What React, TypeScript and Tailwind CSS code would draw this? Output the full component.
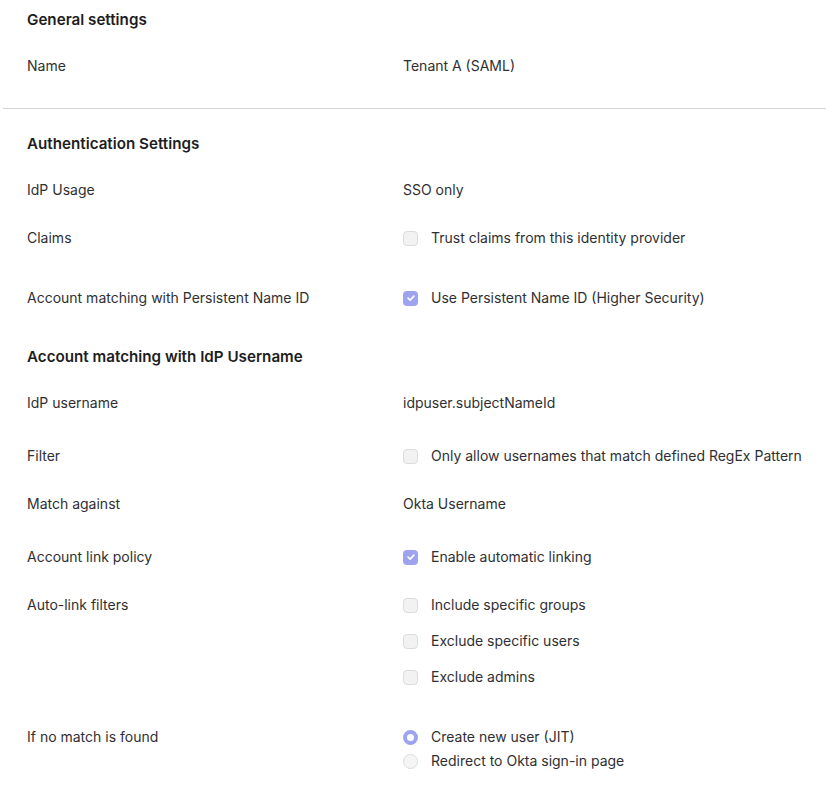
import React from 'react';

const Box = ({ checked }: { checked?: boolean }) =>
  checked ? (
    <span className="flex h-[15px] w-[15px] shrink-0 items-center justify-center rounded-[4px] bg-[#9ea3f0]">
      <svg viewBox="0 0 12 12" className="h-[10px] w-[10px]" fill="none" stroke="white" strokeWidth="2" strokeLinecap="round" strokeLinejoin="round">
        <path d="M2.5 6.2 5 8.5 9.5 3.8" />
      </svg>
    </span>
  ) : (
    <span className="h-[15px] w-[15px] shrink-0 rounded-[4px] border border-[#dcdcde] bg-[#f2f2f3]" />
  );

const Radio = ({ checked }: { checked?: boolean }) =>
  checked ? (
    <span className="h-[15px] w-[15px] shrink-0 rounded-full border-[4px] border-[#9ea3f0] bg-white" />
  ) : (
    <span className="h-[15px] w-[15px] shrink-0 rounded-full border border-[#dcdcde] bg-[#f5f5f6]" />
  );

const Option = ({ control, label }: { control: React.ReactNode; label: string }) => (
  <div className="flex h-5 items-center">
    <span className="flex w-[28px]">{control}</span>
    <span>{label}</span>
  </div>
);

const Row = ({ mt, label, children }: { mt: string; label: string; children: React.ReactNode }) => (
  <div className={`flex ${mt}`}>
    <div className="h-5 w-[376px] shrink-0 leading-5">{label}</div>
    <div className="flex-1 leading-5">{children}</div>
  </div>
);

const Heading = ({ mt, children }: { mt: string; children: React.ReactNode }) => (
  <h2 className={`${mt} h-5 text-[15.2px] font-semibold leading-5 text-[#1d1d21]`}>{children}</h2>
);

export default function App() {
  return (
    <div
      className="min-h-[788px] w-[826px] bg-white text-[14px] text-[#2f2f33]"
      style={{ fontFamily: 'Inter, "Noto Sans", sans-serif' }}
    >
      <div className="pl-[27px] pt-[10px]">
        <Heading mt="mt-0">General settings</Heading>
        <Row mt="mt-[26px]" label="Name">Tenant A (SAML)</Row>
      </div>

      <div className="ml-[3px] mt-[32px] border-t border-[#d4d4d6]" />

      <div className="pl-[27px]">
        <Heading mt="mt-[25px]">Authentication Settings</Heading>
        <Row mt="mt-[26px]" label="IdP Usage">SSO only</Row>
        <Row mt="mt-[28px]" label="Claims">
          <Option control={<Box />} label="Trust claims from this identity provider" />
        </Row>
        <Row mt="mt-[40px]" label="Account matching with Persistent Name ID">
          <Option control={<Box checked />} label="Use Persistent Name ID (Higher Security)" />
        </Row>

        <Heading mt="mt-[39px]">Account matching with IdP Username</Heading>
        <Row mt="mt-[26px]" label="IdP username">idpuser.subjectNameId</Row>
        <Row mt="mt-[33px]" label="Filter">
          <Option control={<Box />} label="Only allow usernames that match defined RegEx Pattern" />
        </Row>
        <Row mt="mt-[28px]" label="Match against">Okta Username</Row>
        <Row mt="mt-[33px]" label="Account link policy">
          <Option control={<Box checked />} label="Enable automatic linking" />
        </Row>
        <Row mt="mt-[28px]" label="Auto-link filters">
          <div className="flex flex-col gap-4">
            <Option control={<Box />} label="Include specific groups" />
            <Option control={<Box />} label="Exclude specific users" />
            <Option control={<Box />} label="Exclude admins" />
          </div>
        </Row>
        <Row mt="mt-[40px]" label="If no match is found">
          <div className="flex flex-col gap-1">
            <Option control={<Radio checked />} label="Create new user (JIT)" />
            <Option control={<Radio />} label="Redirect to Okta sign-in page" />
          </div>
        </Row>
      </div>
    </div>
  );
}
